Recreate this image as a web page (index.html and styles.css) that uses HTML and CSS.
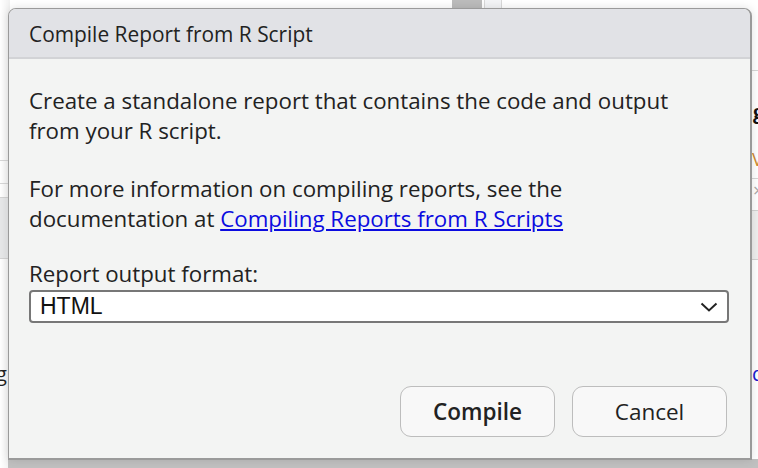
FILE: index.html
```html
<!DOCTYPE html>
<html>
<head>
<meta charset="utf-8">
<link rel="stylesheet" href="styles.css">
</head>
<body>
<div class="backdrop">
  <div class="bg-top-a"></div>
  <div class="bg-top-b"></div>
  <div class="bg-left">
    <div class="bl-line l1"></div>
    <div class="bl-line l2"></div>
    <div class="bl-band"></div>
    <span class="bl-g">g</span>
  </div>
  <div class="bg-right">
    <div class="br-line r1"></div>
    <span class="br-g">g</span>
    <span class="br-v">V</span>
    <div class="br-line r2"></div>
    <span class="br-x">×</span>
    <div class="br-band"></div>
    <span class="br-d">d</span>
  </div>
  <div class="shadow-bottom"></div>
</div>

<div class="dialog">
  <div class="dialog-header">Compile Report from R Script</div>
  <div class="dialog-body">
    <p class="para">Create a standalone report that contains the code and output from your R script.</p>
    <p class="para">For more information on compiling reports, see the documentation at <a class="link" href="#">Compiling Reports from R Scripts</a></p>
    <div class="field">
      <div class="label">Report output format:</div>
      <div class="select">
        <span class="select-value">HTML</span>
        <svg class="chevron" width="18" height="10" viewBox="0 0 18 10"><path d="M1.5 1.5 L9 8.5 L16.5 1.5" fill="none" stroke="#222" stroke-width="2"/></svg>
      </div>
    </div>
  </div>
  <div class="dialog-footer">
    <button class="btn btn-primary">Compile</button>
    <button class="btn">Cancel</button>
  </div>
</div>
</body>
</html>
```

FILE: styles.css
```css
html, body {
  margin: 0;
  padding: 0;
  width: 758px;
  height: 468px;
  overflow: hidden;
  background: #ffffff;
  font-family: "Open Sans", "Noto Sans", sans-serif;
}

.backdrop {
  position: absolute;
  left: 0;
  top: 0;
  width: 758px;
  height: 468px;
  background: #ffffff;
}

.bg-top-a {
  position: absolute;
  left: 452px;
  top: 0;
  width: 30px;
  height: 9px;
  background: #bcbcbc;
}
.bg-top-b {
  position: absolute;
  left: 484px;
  top: 0;
  width: 16px;
  height: 9px;
  background: #f3f4f6;
  border-left: 1px solid #d8d8d8;
  border-right: 1px solid #d8d8d8;
}

.bg-left {
  position: absolute;
  left: 0;
  top: 0;
  width: 10px;
  height: 468px;
  background: linear-gradient(to right, #ffffff, #f0f0f0);
  overflow: hidden;
}
.bl-line {
  position: absolute;
  left: 0;
  width: 10px;
  height: 1px;
  background: #d6d6d6;
}
.l1 { top: 160px; }
.l2 { top: 183px; }
.bl-band {
  position: absolute;
  left: 0;
  top: 197px;
  width: 10px;
  height: 60px;
  background: #e6e7e8;
  border-top: 1px solid #d2d2d2;
  border-bottom: 1px solid #d2d2d2;
}
.bl-g {
  position: absolute;
  left: -4px;
  top: 360px;
  font-size: 20px;
  color: #222;
}

.bg-right {
  position: absolute;
  left: 751px;
  top: 0;
  width: 7px;
  height: 468px;
  background: #ffffff;
  overflow: hidden;
}
.br-line {
  position: absolute;
  left: 0;
  width: 7px;
  height: 1px;
  background: #d6d6d6;
}
.r1 { top: 70px; }
.r2 { top: 178px; }
.br-g {
  position: absolute;
  left: 2px;
  top: 98px;
  font-size: 20px;
  font-weight: 700;
  color: #111;
}
.br-v {
  position: absolute;
  left: 1px;
  top: 147px;
  font-size: 18px;
  color: #d08a30;
}
.br-x {
  position: absolute;
  left: 2px;
  top: 178px;
  font-size: 18px;
  color: #aaa;
}
.br-band {
  position: absolute;
  left: 0;
  top: 210px;
  width: 7px;
  height: 48px;
  background: #eeeeee;
  border-top: 1px solid #d2d2d2;
  border-bottom: 1px solid #d2d2d2;
}
.br-d {
  position: absolute;
  left: 1px;
  top: 360px;
  font-size: 20px;
  color: #1a1ad0;
}

.shadow-bottom {
  position: absolute;
  left: 8px;
  top: 459px;
  width: 750px;
  height: 9px;
  background: #c0c0c0;
}

.dialog {
  position: absolute;
  left: 8px;
  top: 8px;
  width: 741px;
  height: 449px;
  border: 1px solid #9a9a9a;
  border-bottom-width: 2px;
  border-right-width: 2px;
  border-radius: 8px 8px 0 0;
  background: #f3f4f3;
  display: flex;
  flex-direction: column;
  box-shadow: 0 0 10px rgba(0,0,0,0.12);
  color: #222;
}

.dialog-header {
  background: #e1e2e6;
  border-bottom: 2px solid #d2d3d6;
  border-radius: 7px 7px 0 0;
  display: flex;
  align-items: center;
  padding-left: 20px;
  padding-top: 2px;
  box-sizing: border-box;
  height: 50px;
  font-size: 20.9px;
  color: #222;
}

.dialog-body {
  padding: 27px 21px 0 20px;
  flex: 1;
}

.para {
  margin: 0 0 28px 0;
  max-width: 675px;
  font-size: 22.3px;
  line-height: 30px;
}

.link {
  color: #0b0be0;
  text-decoration: underline;
}

.field {
  margin-top: 2px;
}

.label {
  font-size: 22.3px;
  line-height: 24px;
  margin-bottom: 4px;
}

.select {
  height: 29px;
  border: 2px solid #777;
  border-radius: 4px;
  background: #fff;
  display: flex;
  align-items: center;
  justify-content: space-between;
  padding: 0 9px 0 9px;
}

.select-value {
  font-family: "Liberation Sans", Arial, sans-serif;
  font-size: 23px;
  color: #111;
}

.chevron {
  display: block;
}

.dialog-footer {
  display: flex;
  justify-content: flex-end;
  gap: 17px;
  padding: 0 23px 21px 0;
}

.btn {
  width: 155px;
  height: 51px;
  border: 1.5px solid #bdbdbd;
  border-radius: 11px;
  background: #f8f8f8;
  font-family: "Open Sans", "Noto Sans", sans-serif;
  font-size: 22.5px;
  color: #222;
  padding: 0;
}

.btn-primary {
  font-weight: 600;
}
```
